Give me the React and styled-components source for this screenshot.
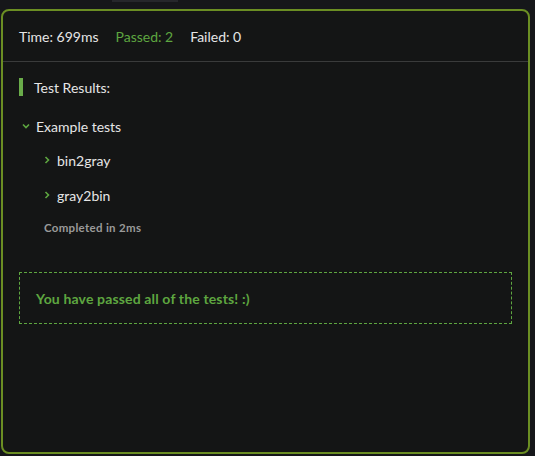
import React from "react";
import styled, { createGlobalStyle } from "styled-components";

const GlobalStyle = createGlobalStyle`
  body {
    margin: 0;
    background: #16171a;
    font-family: Lato, "Liberation Sans", sans-serif;
  }
`;

const Page = styled.div`
  position: relative;
  width: 535px;
  height: 456px;
  padding: 9px 5px 2px 1px;
  box-sizing: border-box;
`;

const Tab = styled.div`
  position: absolute;
  top: 0;
  left: 112px;
  width: 66px;
  height: 2px;
  background: #26272b;
`;

const Panel = styled.div`
  height: 100%;
  box-sizing: border-box;
  border: 2px solid #6b8e23;
  border-radius: 8px;
  background: #141515;
  display: flex;
  flex-direction: column;
`;

const Header = styled.div`
  display: flex;
  align-items: center;
  gap: 17px;
  height: 50px;
  padding: 0 16px;
  border-bottom: 1px solid #3a3b3b;
  font-size: 14px;
  color: #e6e6e6;
`;

const Stat = styled.span`
  color: ${(p) => (p.$green ? "#5ea640" : "#e6e6e6")};
`;

const Body = styled.div`
  padding: 16px 16px;
  display: flex;
  flex-direction: column;
`;

const Heading = styled.div`
  display: flex;
  align-items: center;
  gap: 11px;
  height: 18px;
  font-size: 14px;
  color: #e6e6e6;
  &::before {
    content: "";
    width: 4px;
    height: 18px;
    background: #6aac4a;
  }
`;

const Group = styled.div`
  margin-top: ${(p) => p.$mt || 0}px;
  padding-left: ${(p) => p.$indent || 0}px;
`;

const Row = styled.div`
  display: flex;
  align-items: center;
  gap: ${(p) => p.$gap || 6}px;
  height: 18px;
  font-size: 14px;
  color: #e6e6e6;
  margin-bottom: ${(p) => p.$mb || 0}px;
`;

const Chevron = ({ down }) => (
  <svg width="8" height="8" viewBox="0 0 8 8">
    <path
      d={down ? "M1 2.5 L4 5.5 L7 2.5" : "M2.5 1 L5.5 4 L2.5 7"}
      fill="none"
      stroke="#5ea640"
      strokeWidth="1.6"
    />
  </svg>
);

const Completed = styled.div`
  margin: 17px 0 0 22px;
  font-size: 11.5px;
  font-weight: 700;
  color: #9a9a9a;
  letter-spacing: 0.3px;
`;

const PassBox = styled.div`
  margin-top: 38px;
  height: 52px;
  box-sizing: border-box;
  border: 1px dashed #5ea640;
  display: flex;
  align-items: center;
  padding-left: 16px;
  font-size: 14px;
  font-weight: 700;
  letter-spacing: 0.15px;
  color: #5ea640;
`;

export default function App() {
  return (
    <>
      <GlobalStyle />
      <Page>
        <Tab />
        <Panel>
          <Header>
            <Stat>Time: 699ms</Stat>
            <Stat $green>Passed: 2</Stat>
            <Stat>Failed: 0</Stat>
          </Header>
          <Body>
            <Heading>Test Results:</Heading>
            <Group $mt={21} $indent={3}>
              <Row $gap={6}>
                <Chevron down />
                Example tests
              </Row>
              <Group $mt={16} $indent={21}>
                <Row $mb={17}>
                  <Chevron />
                  bin2gray
                </Row>
                <Row>
                  <Chevron />
                  gray2bin
                </Row>
              </Group>
              <Completed>Completed in 2ms</Completed>
            </Group>
            <PassBox>You have passed all of the tests! :)</PassBox>
          </Body>
        </Panel>
      </Page>
    </>
  );
}
